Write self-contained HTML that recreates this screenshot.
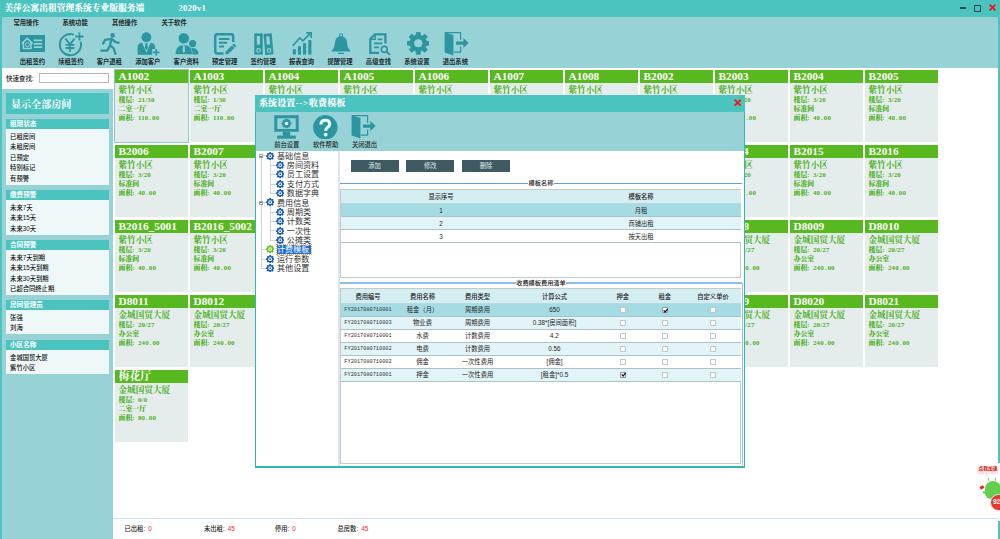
<!DOCTYPE html>
<html lang="zh-CN"><head><meta charset="utf-8"><title>美萍公寓出租管理系统专业版服务端</title>
<style>*{margin:0;padding:0;box-sizing:border-box}
html,body{width:1000px;height:539px;overflow:hidden;background:#fff}
body{position:relative;font-family:"Liberation Sans","Noto Sans CJK SC",sans-serif;font-size:7px;color:#222}
.a{position:absolute}
.sf{font-family:"Liberation Serif","Noto Serif CJK SC",serif;font-weight:bold}
.t{position:absolute;white-space:nowrap;line-height:1}
.titlebar{left:0;top:0;width:1000px;height:17px;background:#4bc4c0}
.toolbar{left:2px;top:17px;width:996px;height:50.7px;background:#96d2d6}
.lb{left:0;top:17px;width:2px;height:522px;background:#4bc4c0}
.rb{left:998px;top:17px;width:2px;height:522px;background:#4bc4c0}
.menu{font-size:6.3px;top:20.4px;color:#1c2a2c;font-weight:bold}
.tl{font-size:6.3px;top:59.2px;color:#1c2a2c;width:40px;text-align:center;font-weight:bold}
.side{left:2px;top:89px;width:111px;height:450px;background:#96d2d6}
.sh{left:5.6px;width:103.4px;height:10px;background:#4bc4c0;color:#fff;font-size:6.6px;padding:0.8px 0 0 4.4px;line-height:10px;font-weight:bold;overflow:hidden}
.sl{left:5.5px;width:103.5px;background:#eef8f9;font-size:6.3px;color:#111;padding:3px 0 0 4.6px;line-height:10.5px;font-weight:500}
.card{width:73px;height:72.4px;background:#e4edec}
.card .h{position:absolute;left:0;top:0;width:73px;height:13.5px;background:#58b81f;color:#fff;font-size:11.3px;line-height:13.5px;padding-left:3.5px;white-space:nowrap;overflow:hidden}
.card .n{position:absolute;left:3.5px;top:15.9px;font-size:8.6px;color:#4db01c;white-space:nowrap;line-height:1}
.card .d{font-weight:900;position:absolute;left:3.5px;font-size:6.9px;color:#4db01c;white-space:nowrap;line-height:1;word-spacing:1.6px}
.dlg{left:255px;top:95px;width:490.4px;height:372.6px;background:#fff;border:1px solid #2fb7b8;border-width:0 1.5px 2px 1px}
.btn{top:160px;width:48px;height:12px;background:#3f5a62;color:#dfe8ea;font-size:6.3px;text-align:center;line-height:12px}
.tr{left:341px;width:400px;height:12.9px}
.c{position:absolute;top:0;height:100%;font-size:6.3px;color:#262626;font-weight:400;white-space:nowrap;display:flex;align-items:center;justify-content:center}
.cb{position:absolute;width:5.6px;height:5.6px;border:0.8px solid #aab4b8;background:#fff;border-radius:1px}
.tree{font-size:8.1px;color:#333;line-height:1}
.m{letter-spacing:0.18px}
.p{margin:0 0.9px 0 0.9px}
</style></head>
<body>
<div class="a titlebar"></div>
<div class="t sf" style="left:4.2px;top:4px;font-size:8.75px;color:#fff;font-weight:900">美萍公寓出租管理系统专业版服务端</div>
<div class="t sf" style="left:178.5px;top:4.4px;font-size:8.6px;color:#fff;letter-spacing:0.3px">2020v1</div>
<div class="a" style="left:960px;top:7.3px;width:5.6px;height:1.6px;background:#2d4a52"></div>
<div class="a" style="left:974px;top:5.3px;width:6.6px;height:6.4px;border:1.3px solid #2d4a52"></div>
<svg class="a" style="left:988.5px;top:4.3px" width="7" height="7" viewBox="0 0 7 7"><path d="M0.6 0.6L6.4 6.4M6.4 0.6L0.6 6.4" stroke="#f01818" stroke-width="1.7"/></svg>
<div class="a toolbar"></div><div class="a lb"></div><div class="a rb"></div>
<div class="t menu" style="left:13.5px">常用操作</div>
<div class="t menu" style="left:62.5px">系统功能</div>
<div class="t menu" style="left:112px">其他操作</div>
<div class="t menu" style="left:161.5px">关于软件</div>
<div class="t tl" style="left:12.40px">出租签约</div>
<div class="t tl" style="left:50.85px">续租签约</div>
<div class="t tl" style="left:89.30px">客户退租</div>
<div class="t tl" style="left:127.75px">添加客户</div>
<div class="t tl" style="left:166.20px">客户资料</div>
<div class="t tl" style="left:204.65px">预定管理</div>
<div class="t tl" style="left:243.10px">签约管理</div>
<div class="t tl" style="left:281.55px">报表查询</div>
<div class="t tl" style="left:320.00px">提醒管理</div>
<div class="t tl" style="left:358.45px">高级查找</div>
<div class="t tl" style="left:396.90px">系统设置</div>
<div class="t tl" style="left:435.35px">退出系统</div>
<svg class="a" style="left:20px;top:35px" width="25" height="17" viewBox="0 0 25 17"><rect x="0" y="0" width="25" height="17" fill="#2b95a0"/><path d="M1.8 8.6L7.2 3.4L12.6 8.6M3.4 7.8V13.4H11V7.8" fill="none" stroke="#96d2d6" stroke-width="1.5"/><circle cx="7.4" cy="9.6" r="2" fill="none" stroke="#96d2d6" stroke-width="1"/><path d="M13.8 5.4H22.2M13.8 8.8H22.2M13.8 12.2H22.2" stroke="#96d2d6" stroke-width="1.7"/></svg>
<svg class="a" style="left:57.5px;top:31.5px" width="26" height="25" viewBox="0 0 26 25"><path d="M15 2.4A10.6 10.6 0 1 0 22.8 10.6" fill="none" stroke="#2b95a0" stroke-width="2" stroke-linecap="round"/><path d="M7.4 6.6L12 12.4L16.6 6.6M12 12.4V20M7.6 12.8H16.4M7.6 16H16.4" fill="none" stroke="#2b95a0" stroke-width="1.8"/><path d="M21.4 0.4V8.6M17.3 4.5H25.5" stroke="#2b95a0" stroke-width="1.8"/></svg>
<svg class="a" style="left:100px;top:32.5px" width="20" height="22.5" viewBox="0 0 20 22.5"><circle cx="12.6" cy="2.4" r="2.3" fill="#2b95a0"/><path d="M11.2 5.6L10.2 12.3L13.8 15.3L15.4 21M10.2 12.3L7.2 17.6L1.2 17.6M10.8 5.8L5 6.8L3.2 10.4M11.6 6L15.4 9L18.6 9.8" fill="none" stroke="#2b95a0" stroke-width="2.3" stroke-linecap="round" stroke-linejoin="round"/></svg>
<svg class="a" style="left:136.5px;top:31.8px" width="23" height="24" viewBox="0 0 23 24"><circle cx="9.4" cy="5.2" r="4.9" fill="#2b95a0"/><path d="M0.6 22.8V15.5Q0.6 11.5 5 10.6L9.4 20.5L13.8 10.6Q18.2 11.5 18.2 15.5V17H15.2V22.8Z" fill="#2b95a0"/><path d="M8.5 10.8H10.3L10.9 16L9.4 18L7.9 16Z" fill="#2b95a0"/><path d="M19.2 17V23.6M15.9 20.3H22.5" stroke="#2b95a0" stroke-width="1.7"/></svg>
<svg class="a" style="left:174.5px;top:32.5px" width="24" height="22" viewBox="0 0 24 22"><circle cx="17.6" cy="10.6" r="3.6" fill="#2b95a0"/><path d="M12 21.5Q12 15 17.6 15Q23.4 15 23.4 21.5Z" fill="#2b95a0"/><circle cx="8.8" cy="5.4" r="5.6" fill="#2b95a0" stroke="#96d2d6" stroke-width="0.8"/><path d="M0.2 21.5Q0.2 11.8 8.8 11.8Q17.4 11.8 17.4 21.5Z" fill="#2b95a0" stroke="#96d2d6" stroke-width="0.6"/><path d="M8 12.2H9.6L10 18.4L8.8 19.8L7.6 18.4Z" fill="#96d2d6"/></svg>
<svg class="a" style="left:214px;top:32.5px" width="23" height="23" viewBox="0 0 23 23"><path d="M19.2 9V3.4Q19.2 1.2 17 1.2H3.4Q1.2 1.2 1.2 3.4V18.2Q1.2 20.4 3.4 20.4H9.5" fill="none" stroke="#2b95a0" stroke-width="2.5"/><path d="M5 6H15.4M5 9.8H13M5 13.6H10" stroke="#2b95a0" stroke-width="2"/><path d="M11.2 21.6L12 18.2L19.8 10.4L22.4 13L14.6 20.8Z" fill="#2b95a0"/><path d="M17.6 11.8L20.6 14.8" stroke="#96d2d6" stroke-width="0.9"/></svg>
<svg class="a" style="left:254px;top:32.5px" width="20" height="22" viewBox="0 0 20 22"><rect x="0.3" y="0.4" width="8.4" height="21.2" fill="#2b95a0"/><rect x="2.8" y="3" width="3.2" height="8.6" fill="#96d2d6"/><circle cx="4.5" cy="17.4" r="1.8" fill="none" stroke="#96d2d6" stroke-width="1.1"/><g transform="rotate(-5 15 11)"><rect x="10.4" y="0.6" width="8.2" height="21" fill="#2b95a0"/><rect x="12.8" y="3.2" width="3.2" height="8.4" fill="#96d2d6"/><circle cx="14.5" cy="17.4" r="1.8" fill="none" stroke="#96d2d6" stroke-width="1.1"/></g></svg>
<svg class="a" style="left:292px;top:32px" width="20" height="23" viewBox="0 0 20 23"><rect x="0.8" y="17.2" width="3" height="5.4" fill="#2b95a0"/><rect x="5.9" y="14.2" width="3.1" height="8.4" fill="#2b95a0"/><rect x="11" y="11.2" width="3.1" height="11.4" fill="#2b95a0"/><rect x="16.3" y="8" width="3.1" height="14.6" fill="#2b95a0"/><path d="M0.8 13.8L7.8 6L10.8 8.8L18.4 1.4" fill="none" stroke="#2b95a0" stroke-width="1.6"/><path d="M14.2 0.9H19.2V5.9" fill="none" stroke="#2b95a0" stroke-width="1.6"/></svg>
<svg class="a" style="left:330.5px;top:32.5px" width="20" height="22" viewBox="0 0 20 22"><circle cx="10" cy="2.4" r="1.6" fill="none" stroke="#2b95a0" stroke-width="1.1"/><path d="M10 3.2Q16 3.6 16.2 10.4Q16.4 15 19.4 17.6Q19.6 18.6 18.4 18.6H1.6Q0.4 18.6 0.6 17.6Q3.6 15 3.8 10.4Q4 3.6 10 3.2Z" fill="#2b95a0"/><path d="M7.6 20.4H12.4" stroke="#2b95a0" stroke-width="1.4" stroke-linecap="round"/></svg>
<svg class="a" style="left:369px;top:32.5px" width="22" height="22.5" viewBox="0 0 22 22.5"><path d="M16.4 10.6V1.3H6L1.3 6V19.8H10" fill="none" stroke="#2b95a0" stroke-width="2.3"/><path d="M6.2 1.2V6.2H1.2" fill="none" stroke="#2b95a0" stroke-width="1.4"/><path d="M8.6 6.4H13.4M5 10.4H13.4M5 14.4H10" stroke="#2b95a0" stroke-width="1.8"/><circle cx="15.3" cy="16.4" r="3" fill="none" stroke="#2b95a0" stroke-width="1.6"/><path d="M17.6 18.8L20.6 21.6" stroke="#2b95a0" stroke-width="1.9" stroke-linecap="round"/></svg>
<svg class="a" style="left:406.5px;top:32px" width="22.5" height="22.5" viewBox="0 0 22.5 22.5"><path d="M19.33 9.23L22.25 9.40L22.25 13.10L19.33 13.27L18.39 15.53L20.33 17.71L17.71 20.33L15.53 18.39L13.27 19.33L13.10 22.25L9.40 22.25L9.23 19.33L6.97 18.39L4.79 20.33L2.17 17.71L4.11 15.53L3.17 13.27L0.25 13.10L0.25 9.40L3.17 9.23L4.11 6.97L2.17 4.79L4.79 2.17L6.97 4.11L9.23 3.17L9.40 0.25L13.10 0.25L13.27 3.17L15.53 4.11L17.71 2.17L20.33 4.79L18.39 6.97Z" fill="#2b95a0" stroke="#2b95a0" stroke-width="0.90" stroke-linejoin="round"/><circle cx="11.25" cy="11.25" r="4.05" fill="#96d2d6"/></svg>
<svg class="a" style="left:443.5px;top:30.5px" width="25.0" height="25.0" viewBox="0 0 25 25"><path d="M0.6 1.2L9.4 4V24.6L0.6 21.4Z" fill="#2b95a0"/><path d="M1 1.6H16.6V9M16.6 15.4V21.2H9.6" fill="none" stroke="#2b95a0" stroke-width="1.2"/><path d="M12 10.4H19.4V7L24.6 12L19.4 17V13.8H12Z" fill="#2b95a0"/></svg>
<div class="a side"></div>
<div class="t" style="left:6px;top:75.5px;font-size:6.5px;color:#222;font-weight:500">快速查找:</div>
<div class="a" style="left:39px;top:73.3px;width:70px;height:9.4px;border:0.8px solid #b3b9ba;background:#fff"></div>
<div class="a sf" style="left:5.5px;top:93.2px;width:103.5px;height:20.5px;background:#4bc4c0;color:#fff;font-size:10.1px;line-height:23.6px;padding-left:5.4px;overflow:hidden">显示全部房间</div>
<div class="a sh" style="top:118.5px">租期状态</div>
<div class="a sl" style="top:128.5px;height:56.0px">已租房间<br>未租房间<br>已预定<br>特别标记<br>有预警</div>
<div class="a sh" style="top:189.6px">缴费预警</div>
<div class="a sl" style="top:199.6px;height:35.0px">未来7天<br>未来15天<br>未来30天</div>
<div class="a sh" style="top:239.5px">合同预警</div>
<div class="a sl" style="top:249.5px;height:45.5px">未来7天到期<br>未来15天到期<br>未来30天到期<br>已超合同终止期</div>
<div class="a sh" style="top:299.5px">房间管理员</div>
<div class="a sl" style="top:309.5px;height:24.5px">张强<br>刘海</div>
<div class="a sh" style="top:339.5px">小区名称</div>
<div class="a sl" style="top:349.5px;height:24.5px">金城国贸大厦<br>紫竹小区</div>
<div class="a card" style="left:115px;top:69.8px;outline:0.8px solid #8fc7c9;outline-offset:-0.4px"><div class="h sf">A1002</div><div class="n sf">紫竹小区</div><div class="d sf" style="top:27.1px">楼层: <span class="m">21/30</span></div><div class="d sf" style="top:36.7px">二室一厅</div><div class="d sf" style="top:45.7px">面积: <span class="m">110<span class="p">.</span>00</span></div></div>
<div class="a card" style="left:190px;top:69.8px"><div class="h sf">A1003</div><div class="n sf">紫竹小区</div><div class="d sf" style="top:27.1px">楼层: <span class="m">1/30</span></div><div class="d sf" style="top:36.7px">二室一厅</div><div class="d sf" style="top:45.7px">面积: <span class="m">110<span class="p">.</span>00</span></div></div>
<div class="a card" style="left:265px;top:69.8px"><div class="h sf">A1004</div><div class="n sf">紫竹小区</div><div class="d sf" style="top:27.1px">楼层: <span class="m">2/30</span></div><div class="d sf" style="top:36.7px">二室一厅</div><div class="d sf" style="top:45.7px">面积: <span class="m">110<span class="p">.</span>00</span></div></div>
<div class="a card" style="left:340px;top:69.8px"><div class="h sf">A1005</div><div class="n sf">紫竹小区</div><div class="d sf" style="top:27.1px">楼层: <span class="m">2/30</span></div><div class="d sf" style="top:36.7px">二室一厅</div><div class="d sf" style="top:45.7px">面积: <span class="m">110<span class="p">.</span>00</span></div></div>
<div class="a card" style="left:415px;top:69.8px"><div class="h sf">A1006</div><div class="n sf">紫竹小区</div><div class="d sf" style="top:27.1px">楼层: <span class="m">2/30</span></div><div class="d sf" style="top:36.7px">二室一厅</div><div class="d sf" style="top:45.7px">面积: <span class="m">110<span class="p">.</span>00</span></div></div>
<div class="a card" style="left:490px;top:69.8px"><div class="h sf">A1007</div><div class="n sf">紫竹小区</div><div class="d sf" style="top:27.1px">楼层: <span class="m">2/30</span></div><div class="d sf" style="top:36.7px">二室一厅</div><div class="d sf" style="top:45.7px">面积: <span class="m">110<span class="p">.</span>00</span></div></div>
<div class="a card" style="left:565px;top:69.8px"><div class="h sf">A1008</div><div class="n sf">紫竹小区</div><div class="d sf" style="top:27.1px">楼层: <span class="m">2/30</span></div><div class="d sf" style="top:36.7px">二室一厅</div><div class="d sf" style="top:45.7px">面积: <span class="m">110<span class="p">.</span>00</span></div></div>
<div class="a card" style="left:640px;top:69.8px"><div class="h sf">B2002</div><div class="n sf">紫竹小区</div><div class="d sf" style="top:27.1px">楼层: <span class="m">3/20</span></div><div class="d sf" style="top:36.7px">标准间</div><div class="d sf" style="top:45.7px">面积: <span class="m">40<span class="p">.</span>00</span></div></div>
<div class="a card" style="left:715px;top:69.8px"><div class="h sf">B2003</div><div class="n sf">紫竹小区</div><div class="d sf" style="top:27.1px">楼层: <span class="m">3/20</span></div><div class="d sf" style="top:36.7px">标准间</div><div class="d sf" style="top:45.7px">面积: <span class="m">40<span class="p">.</span>00</span></div></div>
<div class="a card" style="left:790px;top:69.8px"><div class="h sf">B2004</div><div class="n sf">紫竹小区</div><div class="d sf" style="top:27.1px">楼层: <span class="m">3/20</span></div><div class="d sf" style="top:36.7px">标准间</div><div class="d sf" style="top:45.7px">面积: <span class="m">40<span class="p">.</span>00</span></div></div>
<div class="a card" style="left:865px;top:69.8px"><div class="h sf">B2005</div><div class="n sf">紫竹小区</div><div class="d sf" style="top:27.1px">楼层: <span class="m">3/20</span></div><div class="d sf" style="top:36.7px">标准间</div><div class="d sf" style="top:45.7px">面积: <span class="m">40<span class="p">.</span>00</span></div></div>
<div class="a card" style="left:115px;top:144.8px"><div class="h sf">B2006</div><div class="n sf">紫竹小区</div><div class="d sf" style="top:27.1px">楼层: <span class="m">3/20</span></div><div class="d sf" style="top:36.7px">标准间</div><div class="d sf" style="top:45.7px">面积: <span class="m">40<span class="p">.</span>00</span></div></div>
<div class="a card" style="left:190px;top:144.8px"><div class="h sf">B2007</div><div class="n sf">紫竹小区</div><div class="d sf" style="top:27.1px">楼层: <span class="m">3/20</span></div><div class="d sf" style="top:36.7px">标准间</div><div class="d sf" style="top:45.7px">面积: <span class="m">40<span class="p">.</span>00</span></div></div>
<div class="a card" style="left:265px;top:144.8px"><div class="h sf">B2008</div><div class="n sf">紫竹小区</div><div class="d sf" style="top:27.1px">楼层: <span class="m">3/20</span></div><div class="d sf" style="top:36.7px">标准间</div><div class="d sf" style="top:45.7px">面积: <span class="m">40<span class="p">.</span>00</span></div></div>
<div class="a card" style="left:340px;top:144.8px"><div class="h sf">B2009</div><div class="n sf">紫竹小区</div><div class="d sf" style="top:27.1px">楼层: <span class="m">3/20</span></div><div class="d sf" style="top:36.7px">标准间</div><div class="d sf" style="top:45.7px">面积: <span class="m">40<span class="p">.</span>00</span></div></div>
<div class="a card" style="left:415px;top:144.8px"><div class="h sf">B2010</div><div class="n sf">紫竹小区</div><div class="d sf" style="top:27.1px">楼层: <span class="m">3/20</span></div><div class="d sf" style="top:36.7px">标准间</div><div class="d sf" style="top:45.7px">面积: <span class="m">40<span class="p">.</span>00</span></div></div>
<div class="a card" style="left:490px;top:144.8px"><div class="h sf">B2011</div><div class="n sf">紫竹小区</div><div class="d sf" style="top:27.1px">楼层: <span class="m">3/20</span></div><div class="d sf" style="top:36.7px">标准间</div><div class="d sf" style="top:45.7px">面积: <span class="m">40<span class="p">.</span>00</span></div></div>
<div class="a card" style="left:565px;top:144.8px"><div class="h sf">B2012</div><div class="n sf">紫竹小区</div><div class="d sf" style="top:27.1px">楼层: <span class="m">3/20</span></div><div class="d sf" style="top:36.7px">标准间</div><div class="d sf" style="top:45.7px">面积: <span class="m">40<span class="p">.</span>00</span></div></div>
<div class="a card" style="left:640px;top:144.8px"><div class="h sf">B2013</div><div class="n sf">紫竹小区</div><div class="d sf" style="top:27.1px">楼层: <span class="m">3/20</span></div><div class="d sf" style="top:36.7px">标准间</div><div class="d sf" style="top:45.7px">面积: <span class="m">40<span class="p">.</span>00</span></div></div>
<div class="a card" style="left:715px;top:144.8px"><div class="h sf">B2014</div><div class="n sf">紫竹小区</div><div class="d sf" style="top:27.1px">楼层: <span class="m">3/20</span></div><div class="d sf" style="top:36.7px">标准间</div><div class="d sf" style="top:45.7px">面积: <span class="m">40<span class="p">.</span>00</span></div></div>
<div class="a card" style="left:790px;top:144.8px"><div class="h sf">B2015</div><div class="n sf">紫竹小区</div><div class="d sf" style="top:27.1px">楼层: <span class="m">3/20</span></div><div class="d sf" style="top:36.7px">标准间</div><div class="d sf" style="top:45.7px">面积: <span class="m">40<span class="p">.</span>00</span></div></div>
<div class="a card" style="left:865px;top:144.8px"><div class="h sf">B2016</div><div class="n sf">紫竹小区</div><div class="d sf" style="top:27.1px">楼层: <span class="m">3/20</span></div><div class="d sf" style="top:36.7px">标准间</div><div class="d sf" style="top:45.7px">面积: <span class="m">40<span class="p">.</span>00</span></div></div>
<div class="a card" style="left:115px;top:219.8px"><div class="h sf">B2016_5001</div><div class="n sf">紫竹小区</div><div class="d sf" style="top:27.1px">楼层: <span class="m">3/20</span></div><div class="d sf" style="top:36.7px">标准间</div><div class="d sf" style="top:45.7px">面积: <span class="m">40<span class="p">.</span>00</span></div></div>
<div class="a card" style="left:190px;top:219.8px"><div class="h sf">B2016_5002</div><div class="n sf">紫竹小区</div><div class="d sf" style="top:27.1px">楼层: <span class="m">3/20</span></div><div class="d sf" style="top:36.7px">标准间</div><div class="d sf" style="top:45.7px">面积: <span class="m">40<span class="p">.</span>00</span></div></div>
<div class="a card" style="left:265px;top:219.8px"><div class="h sf">D8002</div><div class="n sf">金城国贸大厦</div><div class="d sf" style="top:27.1px">楼层: <span class="m">20/27</span></div><div class="d sf" style="top:36.7px">办公室</div><div class="d sf" style="top:45.7px">面积: <span class="m">240<span class="p">.</span>00</span></div></div>
<div class="a card" style="left:340px;top:219.8px"><div class="h sf">D8003</div><div class="n sf">金城国贸大厦</div><div class="d sf" style="top:27.1px">楼层: <span class="m">20/27</span></div><div class="d sf" style="top:36.7px">办公室</div><div class="d sf" style="top:45.7px">面积: <span class="m">240<span class="p">.</span>00</span></div></div>
<div class="a card" style="left:415px;top:219.8px"><div class="h sf">D8004</div><div class="n sf">金城国贸大厦</div><div class="d sf" style="top:27.1px">楼层: <span class="m">20/27</span></div><div class="d sf" style="top:36.7px">办公室</div><div class="d sf" style="top:45.7px">面积: <span class="m">240<span class="p">.</span>00</span></div></div>
<div class="a card" style="left:490px;top:219.8px"><div class="h sf">D8005</div><div class="n sf">金城国贸大厦</div><div class="d sf" style="top:27.1px">楼层: <span class="m">20/27</span></div><div class="d sf" style="top:36.7px">办公室</div><div class="d sf" style="top:45.7px">面积: <span class="m">240<span class="p">.</span>00</span></div></div>
<div class="a card" style="left:565px;top:219.8px"><div class="h sf">D8006</div><div class="n sf">金城国贸大厦</div><div class="d sf" style="top:27.1px">楼层: <span class="m">20/27</span></div><div class="d sf" style="top:36.7px">办公室</div><div class="d sf" style="top:45.7px">面积: <span class="m">240<span class="p">.</span>00</span></div></div>
<div class="a card" style="left:640px;top:219.8px"><div class="h sf">D8007</div><div class="n sf">金城国贸大厦</div><div class="d sf" style="top:27.1px">楼层: <span class="m">20/27</span></div><div class="d sf" style="top:36.7px">办公室</div><div class="d sf" style="top:45.7px">面积: <span class="m">240<span class="p">.</span>00</span></div></div>
<div class="a card" style="left:715px;top:219.8px"><div class="h sf">D8008</div><div class="n sf">金城国贸大厦</div><div class="d sf" style="top:27.1px">楼层: <span class="m">20/27</span></div><div class="d sf" style="top:36.7px">办公室</div><div class="d sf" style="top:45.7px">面积: <span class="m">240<span class="p">.</span>00</span></div></div>
<div class="a card" style="left:790px;top:219.8px"><div class="h sf">D8009</div><div class="n sf">金城国贸大厦</div><div class="d sf" style="top:27.1px">楼层: <span class="m">20/27</span></div><div class="d sf" style="top:36.7px">办公室</div><div class="d sf" style="top:45.7px">面积: <span class="m">240<span class="p">.</span>00</span></div></div>
<div class="a card" style="left:865px;top:219.8px"><div class="h sf">D8010</div><div class="n sf">金城国贸大厦</div><div class="d sf" style="top:27.1px">楼层: <span class="m">20/27</span></div><div class="d sf" style="top:36.7px">办公室</div><div class="d sf" style="top:45.7px">面积: <span class="m">240<span class="p">.</span>00</span></div></div>
<div class="a card" style="left:115px;top:294.8px"><div class="h sf">D8011</div><div class="n sf">金城国贸大厦</div><div class="d sf" style="top:27.1px">楼层: <span class="m">20/27</span></div><div class="d sf" style="top:36.7px">办公室</div><div class="d sf" style="top:45.7px">面积: <span class="m">240<span class="p">.</span>00</span></div></div>
<div class="a card" style="left:190px;top:294.8px"><div class="h sf">D8012</div><div class="n sf">金城国贸大厦</div><div class="d sf" style="top:27.1px">楼层: <span class="m">20/27</span></div><div class="d sf" style="top:36.7px">办公室</div><div class="d sf" style="top:45.7px">面积: <span class="m">240<span class="p">.</span>00</span></div></div>
<div class="a card" style="left:265px;top:294.8px"><div class="h sf">D8013</div><div class="n sf">金城国贸大厦</div><div class="d sf" style="top:27.1px">楼层: <span class="m">20/27</span></div><div class="d sf" style="top:36.7px">办公室</div><div class="d sf" style="top:45.7px">面积: <span class="m">240<span class="p">.</span>00</span></div></div>
<div class="a card" style="left:340px;top:294.8px"><div class="h sf">D8014</div><div class="n sf">金城国贸大厦</div><div class="d sf" style="top:27.1px">楼层: <span class="m">20/27</span></div><div class="d sf" style="top:36.7px">办公室</div><div class="d sf" style="top:45.7px">面积: <span class="m">240<span class="p">.</span>00</span></div></div>
<div class="a card" style="left:415px;top:294.8px"><div class="h sf">D8015</div><div class="n sf">金城国贸大厦</div><div class="d sf" style="top:27.1px">楼层: <span class="m">20/27</span></div><div class="d sf" style="top:36.7px">办公室</div><div class="d sf" style="top:45.7px">面积: <span class="m">240<span class="p">.</span>00</span></div></div>
<div class="a card" style="left:490px;top:294.8px"><div class="h sf">D8016</div><div class="n sf">金城国贸大厦</div><div class="d sf" style="top:27.1px">楼层: <span class="m">20/27</span></div><div class="d sf" style="top:36.7px">办公室</div><div class="d sf" style="top:45.7px">面积: <span class="m">240<span class="p">.</span>00</span></div></div>
<div class="a card" style="left:565px;top:294.8px"><div class="h sf">D8017</div><div class="n sf">金城国贸大厦</div><div class="d sf" style="top:27.1px">楼层: <span class="m">20/27</span></div><div class="d sf" style="top:36.7px">办公室</div><div class="d sf" style="top:45.7px">面积: <span class="m">240<span class="p">.</span>00</span></div></div>
<div class="a card" style="left:640px;top:294.8px"><div class="h sf">D8018</div><div class="n sf">金城国贸大厦</div><div class="d sf" style="top:27.1px">楼层: <span class="m">20/27</span></div><div class="d sf" style="top:36.7px">办公室</div><div class="d sf" style="top:45.7px">面积: <span class="m">240<span class="p">.</span>00</span></div></div>
<div class="a card" style="left:715px;top:294.8px"><div class="h sf">D8019</div><div class="n sf">金城国贸大厦</div><div class="d sf" style="top:27.1px">楼层: <span class="m">20/27</span></div><div class="d sf" style="top:36.7px">办公室</div><div class="d sf" style="top:45.7px">面积: <span class="m">240<span class="p">.</span>00</span></div></div>
<div class="a card" style="left:790px;top:294.8px"><div class="h sf">D8020</div><div class="n sf">金城国贸大厦</div><div class="d sf" style="top:27.1px">楼层: <span class="m">20/27</span></div><div class="d sf" style="top:36.7px">办公室</div><div class="d sf" style="top:45.7px">面积: <span class="m">240<span class="p">.</span>00</span></div></div>
<div class="a card" style="left:865px;top:294.8px"><div class="h sf">D8021</div><div class="n sf">金城国贸大厦</div><div class="d sf" style="top:27.1px">楼层: <span class="m">20/27</span></div><div class="d sf" style="top:36.7px">办公室</div><div class="d sf" style="top:45.7px">面积: <span class="m">240<span class="p">.</span>00</span></div></div>
<div class="a card" style="left:115px;top:369.8px"><div class="h sf" style="font-size:10.9px">梅花厅</div><div class="n sf">金城国贸大厦</div><div class="d sf" style="top:27.1px">楼层: <span class="m">0/0</span></div><div class="d sf" style="top:36.7px">二室一厅</div><div class="d sf" style="top:45.7px">面积: <span class="m">80<span class="p">.</span>00</span></div></div>
<div class="a" style="left:113px;top:518.2px;width:885px;height:1.2px;background:#cfe2f3"></div>
<div class="t" style="left:124.5px;top:526.3px;font-size:6.3px;color:#1a1a1a;font-weight:500">已出租:<span style="color:#f02020;font-weight:normal;margin-left:3px">0</span></div>
<div class="t" style="left:204px;top:526.3px;font-size:6.3px;color:#1a1a1a;font-weight:500">未出租:<span style="color:#f02020;font-weight:normal;margin-left:3px">45</span></div>
<div class="t" style="left:275px;top:526.3px;font-size:6.3px;color:#1a1a1a;font-weight:500">停用:<span style="color:#f02020;font-weight:normal;margin-left:3px">0</span></div>
<div class="t" style="left:337.5px;top:526.3px;font-size:6.3px;color:#1a1a1a;font-weight:500">总房数:<span style="color:#f02020;font-weight:normal;margin-left:3px">45</span></div>
<div class="a" style="left:997.5px;top:463px;width:2.5px;height:58px;background:#fff"></div>
<div class="a" style="left:977px;top:466.6px;width:21.4px;height:7px;background:#fde0e0;border-radius:1.5px"></div>
<div class="a" style="left:984.5px;top:473px;width:0;height:0;border-left:1.5px solid transparent;border-right:2.5px solid transparent;border-top:5px solid #fde0e0"></div>
<div class="t" style="left:978.6px;top:467.4px;font-size:4.7px;color:#d01010;font-weight:bold;letter-spacing:0.05px">点我加速</div>
<div class="a" style="left:987.6px;top:478.4px;width:1px;height:3.4px;background:#5fce48;transform:rotate(-20deg)"></div>
<div class="a" style="left:994.6px;top:478px;width:1px;height:3.4px;background:#5fce48;transform:rotate(15deg)"></div>
<div class="a" style="left:985.4px;top:481px;width:16px;height:18px;background:#62d04c;border-radius:8px 8px 6px 6px"></div>
<div class="a" style="left:982.6px;top:492px;width:5px;height:1.6px;background:#62d04c;transform:rotate(22deg)"></div>
<div class="a" style="left:979.8px;top:485.6px;width:3.8px;height:3.2px;background:#e22626;transform:rotate(-28deg)"></div>
<div class="a" style="left:990.4px;top:493.6px;width:17.4px;height:17.4px;border-radius:9px;background:#e6382c;border:1.1px solid #f3e6e2"><span class="t" style="left:1.6px;top:4.2px;font-size:6.4px;color:#fff;font-weight:bold">92</span></div>
<div class="a dlg"></div>
<div class="a" style="left:255px;top:95px;width:490.4px;height:17px;background:#4bc4c0"></div>
<div class="a" style="left:256px;top:112px;width:487.9px;height:39px;background:#96d2d6"></div>
<div class="t sf" style="left:259px;top:99.2px;font-size:9px;color:#fff;letter-spacing:0.1px;font-weight:900">系统设置<span style="letter-spacing:0.8px">--&gt;</span>收费模板</div>
<svg class="a" style="left:734px;top:98.6px" width="7.4" height="7.4" viewBox="0 0 7 7"><path d="M0.6 0.6L6.4 6.4M6.4 0.6L0.6 6.4" stroke="#f01818" stroke-width="1.7"/></svg>
<svg class="a" style="left:274px;top:114.5px" width="25" height="24" viewBox="0 0 25 24"><path d="M0.3 0.3H24.7V16.8H0.3Z M3.3 3.2V13.9H21.7V3.2Z" fill="#2b95a0" fill-rule="evenodd"/><rect x="8.8" y="16.6" width="7.4" height="4.4" fill="#2b95a0"/><rect x="3.2" y="20.6" width="18.6" height="3.1" fill="#2b95a0"/><path d="M15.94 7.45L17.11 7.56L17.11 9.44L15.94 9.55L15.67 10.20L16.42 11.10L15.10 12.42L14.20 11.67L13.55 11.94L13.44 13.11L11.56 13.11L11.45 11.94L10.80 11.67L9.90 12.42L8.58 11.10L9.33 10.20L9.06 9.55L7.89 9.44L7.89 7.56L9.06 7.45L9.33 6.80L8.58 5.90L9.90 4.58L10.80 5.33L11.45 5.06L11.56 3.89L13.44 3.89L13.55 5.06L14.20 5.33L15.10 4.58L16.42 5.90L15.67 6.80Z" fill="#2b95a0" stroke="#2b95a0" stroke-width="0.5" stroke-linejoin="round"/><circle cx="12.5" cy="8.5" r="1.8" fill="#e6f4f5"/></svg>
<svg class="a" style="left:313px;top:114.8px" width="24.6" height="24.6" viewBox="0 0 24.6 24.6"><circle cx="12.3" cy="12.3" r="12.2" fill="#2b95a0"/><path d="M7.9 9.6Q7.9 5.2 12.3 5.2Q16.7 5.2 16.7 9Q16.7 11 14.4 12.5Q12.7 13.6 12.7 15.8" fill="none" stroke="#e8f6f7" stroke-width="3.1"/><circle cx="12.7" cy="19.6" r="1.9" fill="#e8f6f7"/></svg>
<svg class="a" style="left:350.5px;top:113.5px" width="25.0" height="25.0" viewBox="0 0 25 25"><path d="M0.6 1.2L9.4 4V24.6L0.6 21.4Z" fill="#2b95a0"/><path d="M1 1.6H16.6V9M16.6 15.4V21.2H9.6" fill="none" stroke="#2b95a0" stroke-width="1.2"/><path d="M12 10.4H19.4V7L24.6 12L19.4 17V13.8H12Z" fill="#2b95a0"/></svg>
<div class="t" style="left:266.8px;top:142.2px;width:40px;text-align:center;font-size:6.3px;color:#1c2a2c;font-weight:500">前台设置</div>
<div class="t" style="left:305.6px;top:142.2px;width:40px;text-align:center;font-size:6.3px;color:#1c2a2c;font-weight:500">软件帮助</div>
<div class="t" style="left:344.5px;top:142.2px;width:40px;text-align:center;font-size:6.3px;color:#1c2a2c;font-weight:500">关闭退出</div>
<div class="a" style="left:338.3px;top:151px;width:1.8px;height:314.5px;background:#dde4f3"></div>
<div class="a" style="left:260.6px;top:157px;width:0.7px;height:111px;background:#d2d2d2"></div>
<div class="a" style="left:270px;top:160px;width:0.7px;height:33.2px;background:#d2d2d2"></div>
<div class="a" style="left:270px;top:206.6px;width:0.7px;height:33.5px;background:#d2d2d2"></div>
<div class="a" style="left:260.6px;top:155.4px;width:6px;height:0.7px;background:#d2d2d2"></div>
<div class="a" style="left:258.6px;top:153.7px;width:4.2px;height:4.2px;border:0.7px solid #a3a3a3;background:#fff"></div>
<div class="a" style="left:259.6px;top:155.5px;width:2.2px;height:0.6px;background:#777"></div>
<svg class="a" style="left:266.1px;top:151.6px" width="8.4" height="8.4" viewBox="0 0 8.4 8.4"><path d="M7.33 3.22L8.31 3.34L8.31 5.06L7.33 5.18L7.10 5.72L7.72 6.50L6.50 7.72L5.72 7.10L5.18 7.33L5.06 8.31L3.34 8.31L3.22 7.33L2.68 7.10L1.90 7.72L0.68 6.50L1.30 5.72L1.07 5.18L0.09 5.06L0.09 3.34L1.07 3.22L1.30 2.68L0.68 1.90L1.90 0.68L2.68 1.30L3.22 1.07L3.34 0.09L5.06 0.09L5.18 1.07L5.72 1.30L6.50 0.68L7.72 1.90L7.10 2.68Z" fill="#1a5fb4"/><circle cx="4.2" cy="4.2" r="1.85" fill="#fff"/><circle cx="4.2" cy="4.2" r="0.84" fill="#1a5fb4"/></svg>
<div class="t tree" style="left:277px;top:152.6px">基础信息</div>
<div class="a" style="left:270px;top:164.8px;width:6px;height:0.7px;background:#d2d2d2"></div>
<svg class="a" style="left:276.1px;top:160.975px" width="8.4" height="8.4" viewBox="0 0 8.4 8.4"><path d="M7.33 3.22L8.31 3.34L8.31 5.06L7.33 5.18L7.10 5.72L7.72 6.50L6.50 7.72L5.72 7.10L5.18 7.33L5.06 8.31L3.34 8.31L3.22 7.33L2.68 7.10L1.90 7.72L0.68 6.50L1.30 5.72L1.07 5.18L0.09 5.06L0.09 3.34L1.07 3.22L1.30 2.68L0.68 1.90L1.90 0.68L2.68 1.30L3.22 1.07L3.34 0.09L5.06 0.09L5.18 1.07L5.72 1.30L6.50 0.68L7.72 1.90L7.10 2.68Z" fill="#1a5fb4"/><circle cx="4.2" cy="4.2" r="1.85" fill="#fff"/><circle cx="4.2" cy="4.2" r="0.84" fill="#1a5fb4"/></svg>
<div class="t tree" style="left:286.8px;top:162.0px">房间资料</div>
<div class="a" style="left:270px;top:174.1px;width:6px;height:0.7px;background:#d2d2d2"></div>
<svg class="a" style="left:276.1px;top:170.35px" width="8.4" height="8.4" viewBox="0 0 8.4 8.4"><path d="M7.33 3.22L8.31 3.34L8.31 5.06L7.33 5.18L7.10 5.72L7.72 6.50L6.50 7.72L5.72 7.10L5.18 7.33L5.06 8.31L3.34 8.31L3.22 7.33L2.68 7.10L1.90 7.72L0.68 6.50L1.30 5.72L1.07 5.18L0.09 5.06L0.09 3.34L1.07 3.22L1.30 2.68L0.68 1.90L1.90 0.68L2.68 1.30L3.22 1.07L3.34 0.09L5.06 0.09L5.18 1.07L5.72 1.30L6.50 0.68L7.72 1.90L7.10 2.68Z" fill="#1a5fb4"/><circle cx="4.2" cy="4.2" r="1.85" fill="#fff"/><circle cx="4.2" cy="4.2" r="0.84" fill="#1a5fb4"/></svg>
<div class="t tree" style="left:286.8px;top:171.3px">员工设置</div>
<div class="a" style="left:270px;top:183.5px;width:6px;height:0.7px;background:#d2d2d2"></div>
<svg class="a" style="left:276.1px;top:179.725px" width="8.4" height="8.4" viewBox="0 0 8.4 8.4"><path d="M7.33 3.22L8.31 3.34L8.31 5.06L7.33 5.18L7.10 5.72L7.72 6.50L6.50 7.72L5.72 7.10L5.18 7.33L5.06 8.31L3.34 8.31L3.22 7.33L2.68 7.10L1.90 7.72L0.68 6.50L1.30 5.72L1.07 5.18L0.09 5.06L0.09 3.34L1.07 3.22L1.30 2.68L0.68 1.90L1.90 0.68L2.68 1.30L3.22 1.07L3.34 0.09L5.06 0.09L5.18 1.07L5.72 1.30L6.50 0.68L7.72 1.90L7.10 2.68Z" fill="#1a5fb4"/><circle cx="4.2" cy="4.2" r="1.85" fill="#fff"/><circle cx="4.2" cy="4.2" r="0.84" fill="#1a5fb4"/></svg>
<div class="t tree" style="left:286.8px;top:180.7px">支付方式</div>
<div class="a" style="left:270px;top:192.9px;width:6px;height:0.7px;background:#d2d2d2"></div>
<svg class="a" style="left:276.1px;top:189.1px" width="8.4" height="8.4" viewBox="0 0 8.4 8.4"><path d="M7.33 3.22L8.31 3.34L8.31 5.06L7.33 5.18L7.10 5.72L7.72 6.50L6.50 7.72L5.72 7.10L5.18 7.33L5.06 8.31L3.34 8.31L3.22 7.33L2.68 7.10L1.90 7.72L0.68 6.50L1.30 5.72L1.07 5.18L0.09 5.06L0.09 3.34L1.07 3.22L1.30 2.68L0.68 1.90L1.90 0.68L2.68 1.30L3.22 1.07L3.34 0.09L5.06 0.09L5.18 1.07L5.72 1.30L6.50 0.68L7.72 1.90L7.10 2.68Z" fill="#1a5fb4"/><circle cx="4.2" cy="4.2" r="1.85" fill="#fff"/><circle cx="4.2" cy="4.2" r="0.84" fill="#1a5fb4"/></svg>
<div class="t tree" style="left:286.8px;top:190.1px">数据字典</div>
<div class="a" style="left:260.6px;top:202.3px;width:6px;height:0.7px;background:#d2d2d2"></div>
<div class="a" style="left:258.6px;top:200.6px;width:4.2px;height:4.2px;border:0.7px solid #a3a3a3;background:#fff"></div>
<div class="a" style="left:259.6px;top:202.4px;width:2.2px;height:0.6px;background:#777"></div>
<svg class="a" style="left:266.1px;top:198.475px" width="8.4" height="8.4" viewBox="0 0 8.4 8.4"><path d="M7.33 3.22L8.31 3.34L8.31 5.06L7.33 5.18L7.10 5.72L7.72 6.50L6.50 7.72L5.72 7.10L5.18 7.33L5.06 8.31L3.34 8.31L3.22 7.33L2.68 7.10L1.90 7.72L0.68 6.50L1.30 5.72L1.07 5.18L0.09 5.06L0.09 3.34L1.07 3.22L1.30 2.68L0.68 1.90L1.90 0.68L2.68 1.30L3.22 1.07L3.34 0.09L5.06 0.09L5.18 1.07L5.72 1.30L6.50 0.68L7.72 1.90L7.10 2.68Z" fill="#1a5fb4"/><circle cx="4.2" cy="4.2" r="1.85" fill="#fff"/><circle cx="4.2" cy="4.2" r="0.84" fill="#1a5fb4"/></svg>
<div class="t tree" style="left:277px;top:199.5px">费用信息</div>
<div class="a" style="left:270px;top:211.6px;width:6px;height:0.7px;background:#d2d2d2"></div>
<svg class="a" style="left:276.1px;top:207.85px" width="8.4" height="8.4" viewBox="0 0 8.4 8.4"><path d="M7.33 3.22L8.31 3.34L8.31 5.06L7.33 5.18L7.10 5.72L7.72 6.50L6.50 7.72L5.72 7.10L5.18 7.33L5.06 8.31L3.34 8.31L3.22 7.33L2.68 7.10L1.90 7.72L0.68 6.50L1.30 5.72L1.07 5.18L0.09 5.06L0.09 3.34L1.07 3.22L1.30 2.68L0.68 1.90L1.90 0.68L2.68 1.30L3.22 1.07L3.34 0.09L5.06 0.09L5.18 1.07L5.72 1.30L6.50 0.68L7.72 1.90L7.10 2.68Z" fill="#1a5fb4"/><circle cx="4.2" cy="4.2" r="1.85" fill="#fff"/><circle cx="4.2" cy="4.2" r="0.84" fill="#1a5fb4"/></svg>
<div class="t tree" style="left:286.8px;top:208.8px">周期类</div>
<div class="a" style="left:270px;top:221.0px;width:6px;height:0.7px;background:#d2d2d2"></div>
<svg class="a" style="left:276.1px;top:217.225px" width="8.4" height="8.4" viewBox="0 0 8.4 8.4"><path d="M7.33 3.22L8.31 3.34L8.31 5.06L7.33 5.18L7.10 5.72L7.72 6.50L6.50 7.72L5.72 7.10L5.18 7.33L5.06 8.31L3.34 8.31L3.22 7.33L2.68 7.10L1.90 7.72L0.68 6.50L1.30 5.72L1.07 5.18L0.09 5.06L0.09 3.34L1.07 3.22L1.30 2.68L0.68 1.90L1.90 0.68L2.68 1.30L3.22 1.07L3.34 0.09L5.06 0.09L5.18 1.07L5.72 1.30L6.50 0.68L7.72 1.90L7.10 2.68Z" fill="#1a5fb4"/><circle cx="4.2" cy="4.2" r="1.85" fill="#fff"/><circle cx="4.2" cy="4.2" r="0.84" fill="#1a5fb4"/></svg>
<div class="t tree" style="left:286.8px;top:218.2px">计数类</div>
<div class="a" style="left:270px;top:230.4px;width:6px;height:0.7px;background:#d2d2d2"></div>
<svg class="a" style="left:276.1px;top:226.6px" width="8.4" height="8.4" viewBox="0 0 8.4 8.4"><path d="M7.33 3.22L8.31 3.34L8.31 5.06L7.33 5.18L7.10 5.72L7.72 6.50L6.50 7.72L5.72 7.10L5.18 7.33L5.06 8.31L3.34 8.31L3.22 7.33L2.68 7.10L1.90 7.72L0.68 6.50L1.30 5.72L1.07 5.18L0.09 5.06L0.09 3.34L1.07 3.22L1.30 2.68L0.68 1.90L1.90 0.68L2.68 1.30L3.22 1.07L3.34 0.09L5.06 0.09L5.18 1.07L5.72 1.30L6.50 0.68L7.72 1.90L7.10 2.68Z" fill="#1a5fb4"/><circle cx="4.2" cy="4.2" r="1.85" fill="#fff"/><circle cx="4.2" cy="4.2" r="0.84" fill="#1a5fb4"/></svg>
<div class="t tree" style="left:286.8px;top:227.6px">一次性</div>
<div class="a" style="left:270px;top:239.8px;width:6px;height:0.7px;background:#d2d2d2"></div>
<svg class="a" style="left:276.1px;top:235.975px" width="8.4" height="8.4" viewBox="0 0 8.4 8.4"><path d="M7.33 3.22L8.31 3.34L8.31 5.06L7.33 5.18L7.10 5.72L7.72 6.50L6.50 7.72L5.72 7.10L5.18 7.33L5.06 8.31L3.34 8.31L3.22 7.33L2.68 7.10L1.90 7.72L0.68 6.50L1.30 5.72L1.07 5.18L0.09 5.06L0.09 3.34L1.07 3.22L1.30 2.68L0.68 1.90L1.90 0.68L2.68 1.30L3.22 1.07L3.34 0.09L5.06 0.09L5.18 1.07L5.72 1.30L6.50 0.68L7.72 1.90L7.10 2.68Z" fill="#1a5fb4"/><circle cx="4.2" cy="4.2" r="1.85" fill="#fff"/><circle cx="4.2" cy="4.2" r="0.84" fill="#1a5fb4"/></svg>
<div class="t tree" style="left:286.8px;top:237.0px">公摊类</div>
<div class="a" style="left:260.6px;top:249.1px;width:6px;height:0.7px;background:#d2d2d2"></div>
<svg class="a" style="left:266.1px;top:245.35px" width="8.4" height="8.4" viewBox="0 0 8.4 8.4"><path d="M7.33 3.22L8.31 3.34L8.31 5.06L7.33 5.18L7.10 5.72L7.72 6.50L6.50 7.72L5.72 7.10L5.18 7.33L5.06 8.31L3.34 8.31L3.22 7.33L2.68 7.10L1.90 7.72L0.68 6.50L1.30 5.72L1.07 5.18L0.09 5.06L0.09 3.34L1.07 3.22L1.30 2.68L0.68 1.90L1.90 0.68L2.68 1.30L3.22 1.07L3.34 0.09L5.06 0.09L5.18 1.07L5.72 1.30L6.50 0.68L7.72 1.90L7.10 2.68Z" fill="#6cc024"/><circle cx="4.2" cy="4.2" r="1.85" fill="#fff"/><circle cx="4.2" cy="4.2" r="0.84" fill="#6cc024"/></svg>
<div class="a" style="left:276.6px;top:244.6px;width:34.6px;height:9.6px;background:#1e6fd2;outline:0.6px dotted #e8a24a"></div>
<div class="t tree" style="left:277px;top:246.3px;color:#fff">计费模板</div>
<div class="a" style="left:260.6px;top:258.5px;width:6px;height:0.7px;background:#d2d2d2"></div>
<svg class="a" style="left:266.1px;top:254.725px" width="8.4" height="8.4" viewBox="0 0 8.4 8.4"><path d="M7.33 3.22L8.31 3.34L8.31 5.06L7.33 5.18L7.10 5.72L7.72 6.50L6.50 7.72L5.72 7.10L5.18 7.33L5.06 8.31L3.34 8.31L3.22 7.33L2.68 7.10L1.90 7.72L0.68 6.50L1.30 5.72L1.07 5.18L0.09 5.06L0.09 3.34L1.07 3.22L1.30 2.68L0.68 1.90L1.90 0.68L2.68 1.30L3.22 1.07L3.34 0.09L5.06 0.09L5.18 1.07L5.72 1.30L6.50 0.68L7.72 1.90L7.10 2.68Z" fill="#1a5fb4"/><circle cx="4.2" cy="4.2" r="1.85" fill="#fff"/><circle cx="4.2" cy="4.2" r="0.84" fill="#1a5fb4"/></svg>
<div class="t tree" style="left:277px;top:255.7px">运行参数</div>
<div class="a" style="left:260.6px;top:267.9px;width:6px;height:0.7px;background:#d2d2d2"></div>
<svg class="a" style="left:266.1px;top:264.09999999999997px" width="8.4" height="8.4" viewBox="0 0 8.4 8.4"><path d="M7.33 3.22L8.31 3.34L8.31 5.06L7.33 5.18L7.10 5.72L7.72 6.50L6.50 7.72L5.72 7.10L5.18 7.33L5.06 8.31L3.34 8.31L3.22 7.33L2.68 7.10L1.90 7.72L0.68 6.50L1.30 5.72L1.07 5.18L0.09 5.06L0.09 3.34L1.07 3.22L1.30 2.68L0.68 1.90L1.90 0.68L2.68 1.30L3.22 1.07L3.34 0.09L5.06 0.09L5.18 1.07L5.72 1.30L6.50 0.68L7.72 1.90L7.10 2.68Z" fill="#1a5fb4"/><circle cx="4.2" cy="4.2" r="1.85" fill="#fff"/><circle cx="4.2" cy="4.2" r="0.84" fill="#1a5fb4"/></svg>
<div class="t tree" style="left:277px;top:265.1px">其他设置</div>
<div class="a btn" style="left:350.5px">添加</div>
<div class="a btn" style="left:406.3px">修改</div>
<div class="a btn" style="left:462px">删除</div>
<div class="a" style="left:340.2px;top:182.85000000000002px;width:402.3px;height:0.9px;background:#5f9fe0"></div>
<div class="t" style="left:527.8px;top:179.9px;width:26.4px;text-align:center;background:#fff;font-size:6.2px;color:#1c1c1c;font-weight:500">模板名称</div>
<div class="a" style="left:340.4px;top:189.2px;width:401px;height:88.4px;border:0.8px solid #c4c9cb;background:#fff"></div>
<div class="a tr" style="top:189.8px;height:14.2px;background:#d5eef2;border-bottom:0.9px solid #b5d9e0"><div class="c" style="left:0px;width:200px;font-weight:500;color:#1c1c1c">显示序号</div><div class="c" style="left:200px;width:200px;font-weight:500;color:#1c1c1c">模板名称</div></div>
<div class="a tr" style="top:204.0px;height:13.0px;background:#a5dce4;border-bottom:0.9px solid #a9c3c9"><div class="c" style="left:0px;width:200px">1</div><div class="c" style="left:200px;width:200px">月租</div></div>
<div class="a tr" style="top:217.0px;height:13.0px;background:#e2f4f7;border-bottom:0.9px solid #a9c3c9"><div class="c" style="left:0px;width:200px">2</div><div class="c" style="left:200px;width:200px">商铺出租</div></div>
<div class="a tr" style="top:230.0px;height:13.0px;background:#ffffff;border-bottom:0.9px solid #a9c3c9"><div class="c" style="left:0px;width:200px">3</div><div class="c" style="left:200px;width:200px">按天出租</div></div>
<div class="a" style="left:340.2px;top:282.3px;width:402.3px;height:1.6px;background:#8cc0ea"></div>
<div class="t" style="left:515.6px;top:279.70000000000005px;width:50.8px;text-align:center;background:#fff;font-size:6.2px;color:#1c1c1c;font-weight:500">收费模板费用清单</div>
<div class="a" style="left:742.3px;top:283px;width:1.2px;height:182px;background:#8cc0ea"></div>
<div class="a" style="left:340.4px;top:288.4px;width:401px;height:176px;border:0.8px solid #c4c9cb;background:#fff"></div>
<div class="a tr" style="top:289.4px;height:14.6px;background:#d5eef2;border-bottom:0.9px solid #b5d9e0"><div class="c" style="left:0px;width:54px;font-weight:500;color:#1c1c1c">费用编号</div><div class="c" style="left:54px;width:55px;font-weight:500;color:#1c1c1c">费用名称</div><div class="c" style="left:109px;width:55px;font-weight:500;color:#1c1c1c">费用类型</div><div class="c" style="left:164px;width:99px;font-weight:500;color:#1c1c1c">计算公式</div><div class="c" style="left:263px;width:37.5px;font-weight:500;color:#1c1c1c">押金</div><div class="c" style="left:305px;width:37.5px;font-weight:500;color:#1c1c1c">租金</div><div class="c" style="left:344px;width:56px;font-weight:500;color:#1c1c1c">自定义单价</div></div>
<div class="a tr" style="top:304.0px;height:12.9px;background:#a5dce4;border-bottom:0.9px solid #a9c3c9"><div class="c" style="left:0px;width:54px"><span style="font-family:'Liberation Mono',monospace;font-size:5.25px;color:#333">FY2017080710001</span></div><div class="c" style="left:54px;width:55px">租金（月）</div><div class="c" style="left:109px;width:55px">周期费用</div><div class="c" style="left:164px;width:99px">650</div><div class="c" style="left:263px;width:37.5px"><div style="position:relative;flex:none;width:6px;height:6px;border:0.8px solid #bcc5c8;background:#fff;border-radius:0.8px"></div></div><div class="c" style="left:305px;width:37.5px"><div style="position:relative;flex:none;width:6px;height:6px;border:0.8px solid #8f999d;background:#fff;border-radius:0.8px"><svg style="position:absolute;left:-0.2px;top:-0.3px" width="5.2" height="5.2" viewBox="0 0 5 5"><path d="M0.7 2.3L2 3.9L4.5 0.9" fill="none" stroke="#111" stroke-width="1.25"/></svg></div></div><div class="c" style="left:344px;width:56px"><div style="position:relative;flex:none;width:6px;height:6px;border:0.8px solid #bcc5c8;background:#fff;border-radius:0.8px"></div></div></div>
<div class="a tr" style="top:316.9px;height:12.9px;background:#e2f4f7;border-bottom:0.9px solid #a9c3c9"><div class="c" style="left:0px;width:54px"><span style="font-family:'Liberation Mono',monospace;font-size:5.25px;color:#333">FY2017080710003</span></div><div class="c" style="left:54px;width:55px">物业费</div><div class="c" style="left:109px;width:55px">周期费用</div><div class="c" style="left:164px;width:99px">0.38*[房间面积]</div><div class="c" style="left:263px;width:37.5px"><div style="position:relative;flex:none;width:6px;height:6px;border:0.8px solid #bcc5c8;background:#fff;border-radius:0.8px"></div></div><div class="c" style="left:305px;width:37.5px"><div style="position:relative;flex:none;width:6px;height:6px;border:0.8px solid #bcc5c8;background:#fff;border-radius:0.8px"></div></div><div class="c" style="left:344px;width:56px"><div style="position:relative;flex:none;width:6px;height:6px;border:0.8px solid #bcc5c8;background:#fff;border-radius:0.8px"></div></div></div>
<div class="a tr" style="top:329.9px;height:12.9px;background:#ffffff;border-bottom:0.9px solid #a9c3c9"><div class="c" style="left:0px;width:54px"><span style="font-family:'Liberation Mono',monospace;font-size:5.25px;color:#333">FY2017080710001</span></div><div class="c" style="left:54px;width:55px">水费</div><div class="c" style="left:109px;width:55px">计数费用</div><div class="c" style="left:164px;width:99px">4.2</div><div class="c" style="left:263px;width:37.5px"><div style="position:relative;flex:none;width:6px;height:6px;border:0.8px solid #bcc5c8;background:#fff;border-radius:0.8px"></div></div><div class="c" style="left:305px;width:37.5px"><div style="position:relative;flex:none;width:6px;height:6px;border:0.8px solid #bcc5c8;background:#fff;border-radius:0.8px"></div></div><div class="c" style="left:344px;width:56px"><div style="position:relative;flex:none;width:6px;height:6px;border:0.8px solid #bcc5c8;background:#fff;border-radius:0.8px"></div></div></div>
<div class="a tr" style="top:342.8px;height:12.9px;background:#e2f4f7;border-bottom:0.9px solid #a9c3c9"><div class="c" style="left:0px;width:54px"><span style="font-family:'Liberation Mono',monospace;font-size:5.25px;color:#333">FY2017080710002</span></div><div class="c" style="left:54px;width:55px">电费</div><div class="c" style="left:109px;width:55px">计数费用</div><div class="c" style="left:164px;width:99px">0.56</div><div class="c" style="left:263px;width:37.5px"><div style="position:relative;flex:none;width:6px;height:6px;border:0.8px solid #bcc5c8;background:#fff;border-radius:0.8px"></div></div><div class="c" style="left:305px;width:37.5px"><div style="position:relative;flex:none;width:6px;height:6px;border:0.8px solid #bcc5c8;background:#fff;border-radius:0.8px"></div></div><div class="c" style="left:344px;width:56px"><div style="position:relative;flex:none;width:6px;height:6px;border:0.8px solid #bcc5c8;background:#fff;border-radius:0.8px"></div></div></div>
<div class="a tr" style="top:355.7px;height:12.9px;background:#ffffff;border-bottom:0.9px solid #a9c3c9"><div class="c" style="left:0px;width:54px"><span style="font-family:'Liberation Mono',monospace;font-size:5.25px;color:#333">FY2017080710002</span></div><div class="c" style="left:54px;width:55px">佣金</div><div class="c" style="left:109px;width:55px">一次性费用</div><div class="c" style="left:164px;width:99px">[佣金]</div><div class="c" style="left:263px;width:37.5px"><div style="position:relative;flex:none;width:6px;height:6px;border:0.8px solid #bcc5c8;background:#fff;border-radius:0.8px"></div></div><div class="c" style="left:305px;width:37.5px"><div style="position:relative;flex:none;width:6px;height:6px;border:0.8px solid #bcc5c8;background:#fff;border-radius:0.8px"></div></div><div class="c" style="left:344px;width:56px"><div style="position:relative;flex:none;width:6px;height:6px;border:0.8px solid #bcc5c8;background:#fff;border-radius:0.8px"></div></div></div>
<div class="a tr" style="top:368.7px;height:12.9px;background:#e2f4f7;border-bottom:0.9px solid #a9c3c9"><div class="c" style="left:0px;width:54px"><span style="font-family:'Liberation Mono',monospace;font-size:5.25px;color:#333">FY2017080710001</span></div><div class="c" style="left:54px;width:55px">押金</div><div class="c" style="left:109px;width:55px">一次性费用</div><div class="c" style="left:164px;width:99px">[租金]*0.5</div><div class="c" style="left:263px;width:37.5px"><div style="position:relative;flex:none;width:6px;height:6px;border:0.8px solid #8f999d;background:#fff;border-radius:0.8px"><svg style="position:absolute;left:-0.2px;top:-0.3px" width="5.2" height="5.2" viewBox="0 0 5 5"><path d="M0.7 2.3L2 3.9L4.5 0.9" fill="none" stroke="#111" stroke-width="1.25"/></svg></div></div><div class="c" style="left:305px;width:37.5px"><div style="position:relative;flex:none;width:6px;height:6px;border:0.8px solid #bcc5c8;background:#fff;border-radius:0.8px"></div></div><div class="c" style="left:344px;width:56px"><div style="position:relative;flex:none;width:6px;height:6px;border:0.8px solid #bcc5c8;background:#fff;border-radius:0.8px"></div></div></div>
</body></html>
